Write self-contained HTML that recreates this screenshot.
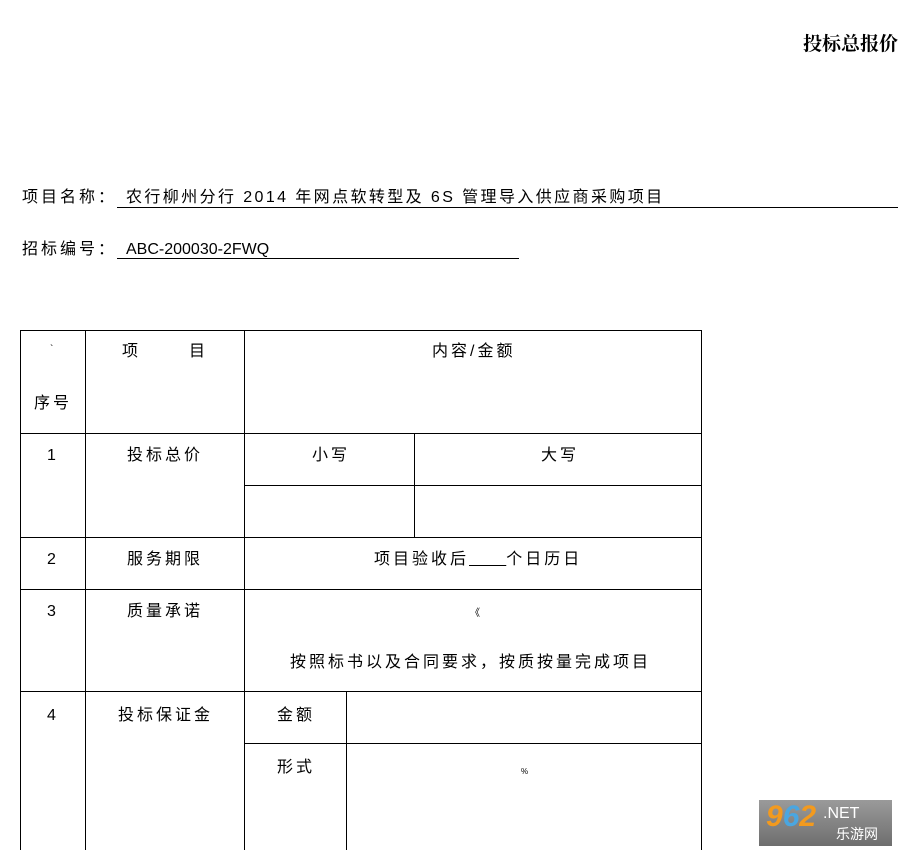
<!DOCTYPE html>
<html><head><meta charset="utf-8"><style>
body{margin:0;width:898px;height:850px;background:#fff;position:relative;overflow:hidden;font-family:"Liberation Sans","Noto Sans CJK SC",sans-serif;color:#000}
.t{position:absolute;font-size:16px;line-height:20px;white-space:nowrap}
.h{position:absolute;background:#000;height:1px}
.v{position:absolute;background:#000;width:1px}
.c{letter-spacing:3px}
</style></head><body>
<div class="t" style="right:0px;top:32px;font-size:19px;line-height:22px;font-weight:bold;font-family:'Noto Serif CJK SC',serif">投标总报价</div>
<div class="t c" style="left:22px;top:188px">项目名称：</div>
<div class="t" style="left:126px;top:188px;letter-spacing:2.4px">农行柳州分行 2014 年网点软转型及 6S 管理导入供应商采购项目</div>
<div class="h" style="left:117px;top:207px;width:781px"></div>
<div class="t c" style="left:22px;top:240px">招标编号：</div>
<div class="t" style="left:126px;top:240px;letter-spacing:0px">ABC-200030-2FWQ</div>
<div class="h" style="left:117px;top:258px;width:402px"></div>

<div class="h" style="left:20px;top:330px;width:682px"></div>
<div class="h" style="left:20px;top:433px;width:682px"></div>
<div class="h" style="left:244px;top:485px;width:458px"></div>
<div class="h" style="left:20px;top:537px;width:682px"></div>
<div class="h" style="left:20px;top:589px;width:682px"></div>
<div class="h" style="left:20px;top:691px;width:682px"></div>
<div class="h" style="left:244px;top:743px;width:458px"></div>
<div class="v" style="left:20px;top:330px;height:520px"></div>
<div class="v" style="left:85px;top:330px;height:520px"></div>
<div class="v" style="left:244px;top:330px;height:520px"></div>
<div class="v" style="left:414px;top:433px;height:104px"></div>
<div class="v" style="left:346px;top:691px;height:159px"></div>
<div class="v" style="left:701px;top:330px;height:520px"></div>

<div class="t" style="left:50px;top:340px;font-size:10px">`</div>
<div class="t c" style="left:34px;top:394px">序号</div>
<div class="t" style="left:122px;top:342px">项</div>
<div class="t" style="left:189px;top:342px">目</div>
<div class="t c" style="left:432px;top:342px">内容/金额</div>
<div class="t" style="left:47px;top:446px">1</div>
<div class="t c" style="left:127px;top:446px">投标总价</div>
<div class="t c" style="left:312px;top:446px">小写</div>
<div class="t c" style="left:541px;top:446px">大写</div>
<div class="t" style="left:47px;top:550px">2</div>
<div class="t c" style="left:127px;top:550px">服务期限</div>
<div class="t c" style="left:374px;top:550px">项目验收后<span style="text-decoration:underline">&nbsp;&nbsp;&nbsp;&nbsp;&nbsp;</span>个日历日</div>
<div class="t" style="left:47px;top:602px">3</div>
<div class="t c" style="left:127px;top:602px">质量承诺</div>
<div class="t" style="left:470px;top:604px;font-size:10px">《</div>
<div class="t c" style="left:290px;top:653px">按照标书以及合同要求，按质按量完成项目</div>
<div class="t" style="left:47px;top:706px">4</div>
<div class="t c" style="left:118px;top:706px">投标保证金</div>
<div class="t c" style="left:277px;top:706px">金额</div>
<div class="t c" style="left:277px;top:758px">形式</div>
<div class="t" style="left:521px;top:762px;font-size:8px">%</div>

<div style="position:absolute;left:759px;top:800px;width:133px;height:46px;background:linear-gradient(#9a9a9a,#6e6e6e)"></div>
<div class="t" style="left:766px;top:801px;font-size:30px;line-height:32px;font-weight:bold;font-style:italic;color:#f39a1e">9<span style="color:#4aa6e0">6</span>2</div>
<div class="t" style="left:823px;top:804px;font-size:16px;color:#fff">.NET</div>
<div class="t" style="left:836px;top:824px;font-size:14px;color:#fff">乐游网</div>
</body></html>
